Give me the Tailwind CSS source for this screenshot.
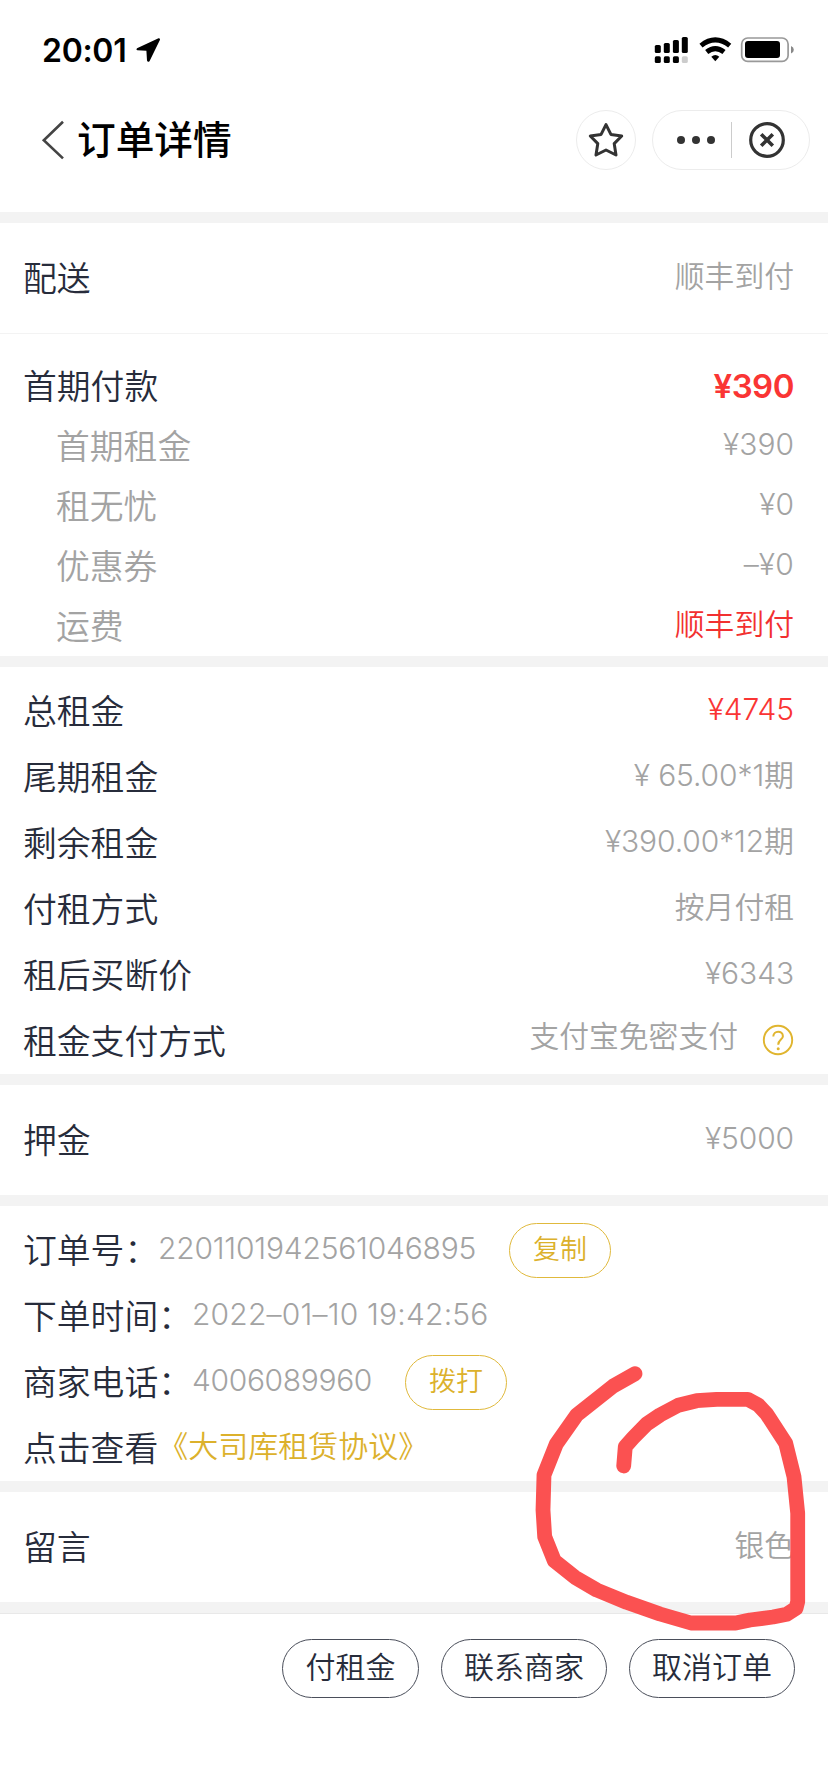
<!DOCTYPE html>
<html lang="zh-CN">
<head>
<meta charset="utf-8">
<title>订单详情</title>
<script src="https://cdn.jsdelivr.net/npm/@tailwindcss/browser@4"></script>
</head>
<body class="bg-white">
<div class="relative flex h-[1792px] w-[828px] flex-col overflow-hidden bg-white font-['Inter','Noto_Sans_CJK_SC',sans-serif] text-[33.8px] font-[350] leading-none text-[#272c3b]">

  <!-- Status bar -->
  <header class="flex h-[100px] shrink-0 items-center pl-[42px] pr-[34px] text-black">
    <span class="pt-0.5 text-[32px] font-semibold tracking-[-0.3px]">20:01</span>
    <svg class="ml-[9px]" width="26" height="26" viewBox="0 0 26 26"><path d="M23.5 1.2 2 11.2Q0.6 12.5 2.3 13.2L11.4 13.8 12 23.5Q12.8 25.8 14.5 24.2L25 2.7Q25.2 0.8 23.5 1.2Z" fill="#000"/></svg>
    <svg class="ml-auto" width="140" height="28" viewBox="654 36 140 28">
      <g fill="#000">
        <rect x="654.8" y="45" width="6" height="8" rx="1.6"/><rect x="663.8" y="43" width="6" height="10" rx="1.6"/><rect x="672.9" y="40" width="6" height="13" rx="1.6"/><rect x="681.8" y="37" width="6" height="16" rx="1.6"/>
        <rect x="654.8" y="56.3" width="6" height="6.7" rx="1.6"/><rect x="663.8" y="56.3" width="6" height="6.7" rx="1.6"/><rect x="672.9" y="56.3" width="6" height="6.7" rx="1.6"/>
        <rect x="681.8" y="56.3" width="6" height="6.7" rx="1.6" fill="#ccc"/>
      </g>
      <g fill="none" stroke="#000" stroke-width="5">
        <path d="M701 45.6Q715.3 34.2 729.700 45.6"/><path d="M706.700 52Q715.3 45.200 724 52"/>
      </g>
      <path d="M711.300 56.800Q715.3 53.200 719.300 56.800L715.3 61.200Z" fill="#000"/>
      <rect x="741.7" y="38" width="46.400" height="23.400" rx="6" fill="none" stroke="#999" stroke-width="1.7"/>
      <rect x="745" y="41" width="35" height="17" rx="3" fill="#000"/>
      <path d="M791 46Q793.8 47 793.8 49.800T791 53.600Z" fill="#888"/>
    </svg>
  </header>

  <!-- Navigation bar -->
  <nav class="flex h-20 shrink-0 items-center pl-[41px] pr-[18px]">
    <svg width="24" height="40" viewBox="0 0 24 40" fill="none" stroke="#444" stroke-width="2.6"><path d="M22 1.8 2.8 20.200 22 38.400"/></svg>
    <h1 class="ml-3 text-[38.700px] font-medium text-black">订单详情</h1>
    <div class="ml-auto flex items-center gap-4">
      <button class="flex size-[60px] items-center justify-center rounded-full border border-[#ececec]">
        <svg width="38" height="38" viewBox="0 0 38 38" fill="none" stroke="#333" stroke-width="3" stroke-linejoin="round"><path d="M19 3.600 23.900 13.400 34.700 15 27.200 22.600 29 34 19 29 9 34 10.800 22.600 3.300 15 14.100 13.400Z"/></svg>
      </button>
      <div class="flex h-[60px] w-[158px] items-center rounded-full border border-[#ececec]">
        <div class="flex w-[78px] justify-center gap-[7px] pl-[8px]"><i class="size-2 rounded-full bg-[#333]"></i><i class="size-2 rounded-full bg-[#333]"></i><i class="size-2 rounded-full bg-[#333]"></i></div>
        <div class="h-9 w-px bg-[#ccc]"></div>
        <div class="flex flex-1 justify-center pr-[7px]">
          <svg width="38" height="38" viewBox="0 0 38 38" fill="none" stroke="#333" stroke-width="3.2"><circle cx="19" cy="19" r="16.300"/><path d="M13.200 13.200 24.800 24.800M24.800 13.200 13.200 24.800" stroke-width="3.600"/></svg>
        </div>
      </div>
    </div>
  </nav>

  <main class="mt-8 flex shrink-0 flex-col bg-[#f3f3f3] pt-[11px]">
    <section class="flex h-[110px] items-center justify-between bg-white pl-[23px] pr-[34px]">
      <span class="pt-0.5">配送</span><span class="pb-0.5 text-[29.800px] text-[#a3a3a3]">顺丰到付</span>
    </section>

    <!-- First payment -->
    <section class="mt-px flex flex-col bg-white pl-[23px] pr-[34px] pt-[22px] *:flex *:h-[60px] *:items-center *:justify-between">
      <div><span class="pt-0.5">首期付款</span><span class="text-[33px] font-semibold tracking-[-0.5px] text-[#fa3534]">¥390</span></div>
      <div class="pl-[33px] text-[#a3a3a3]"><span class="pt-0.5">首期租金</span><span class="pb-1 text-[30px]">¥390</span></div>
      <div class="pl-[33px] text-[#a3a3a3]"><span class="pt-0.5">租无忧</span><span class="pb-1 text-[30px]">¥0</span></div>
      <div class="pl-[33px] text-[#a3a3a3]"><span class="pt-0.5">优惠券</span><span class="pb-1 text-[30px] tracking-[0.2px]">–¥0</span></div>
      <div class="pl-[33px] text-[#a3a3a3]"><span class="pt-0.5">运费</span><span class="pb-0.5 text-[29.800px] text-[#f23030]">顺丰到付</span></div>
    </section>

    <!-- Rent details -->
    <section class="mt-[11px] flex flex-col bg-white pl-[23px] pr-[34px] pt-[11px] *:flex *:h-[66px] *:items-center *:justify-between">
      <div><span class="pt-0.5">总租金</span><span class="pb-1 text-[30px] tracking-[-0.1px] text-[#fa3534]">¥4745</span></div>
      <div><span class="pt-0.5">尾期租金</span><span class="pb-1 text-[30px] tracking-[-0.1px] text-[#a3a3a3]">¥ 65.00*1期</span></div>
      <div><span class="pt-0.5">剩余租金</span><span class="pb-1 text-[30px] tracking-[-0.1px] text-[#a3a3a3]">¥390.00*12期</span></div>
      <div><span class="pt-0.5">付租方式</span><span class="pb-0.5 text-[29.800px] text-[#a3a3a3]">按月付租</span></div>
      <div><span class="pt-0.5">租后买断价</span><span class="pb-1 text-[30px] tracking-[-0.1px] text-[#a3a3a3]">¥6343</span></div>
      <div><span class="pt-0.5">租金支付方式</span>
        <span class="flex items-center gap-6 pb-0.5 text-[29.800px] text-[#a3a3a3]"><span class="pb-1.5">支付宝免密支付</span>
          <svg width="32" height="32" viewBox="0 0 32 32" fill="none" stroke="#e0b52f" stroke-width="1.9"><circle cx="16" cy="16" r="14.200"/><path d="M11.300 12.600C11.300 6.200 20.900 6.200 20.900 12.200 20.900 15.600 16.200 15.800 16.200 20.800" stroke-width="2"/><circle cx="16.200" cy="24.800" r="1.500" fill="#e0b52f" stroke="none"/></svg>
        </span>
      </div>
    </section>

    <section class="mt-[11px] flex h-[110px] items-center justify-between bg-white pl-[23px] pr-[34px]">
      <span class="pt-0.5">押金</span><span class="pb-1 text-[30px] tracking-[-0.1px] text-[#a3a3a3]">¥5000</span>
    </section>

    <!-- Order information -->
    <section class="mt-[11px] flex flex-col bg-white pl-[23px] pt-[11px] *:flex *:h-[66px] *:items-center">
      <div><span class="w-[135px] whitespace-nowrap pt-0.5">订单号：</span><span class="w-[351px] pb-1 text-[30px] tracking-[-0.2px] text-[#a3a3a3]">2201101942561046895</span><button class="h-[55px] w-[102px] rounded-full border border-[#e0b93c] pb-0.5 text-[27px] text-[#dcb12c]">复制</button></div>
      <div><span class="w-[169px] whitespace-nowrap pt-0.5">下单时间：</span><span class="pb-1 text-[30px] tracking-[0.2px] text-[#a3a3a3]">2022–01–10 19:42:56</span></div>
      <div><span class="w-[169px] whitespace-nowrap pt-0.5">商家电话：</span><span class="w-[213px] pb-1 text-[30px] tracking-[-0.35px] text-[#a3a3a3]">4006089960</span><button class="h-[55px] w-[102px] rounded-full border border-[#e0b93c] pb-0.5 text-[27px] text-[#dcb12c]">拨打</button></div>
      <div><span class="pt-0.5">点击查看</span><span class="pb-1 text-[30px] text-[#dcb12c]">《大司库租赁协议》</span></div>
    </section>

    <section class="mt-[11px] flex h-[110px] items-center justify-between bg-white pl-[23px] pr-[34px]">
      <span class="pt-0.5">留言</span><span class="pb-0.5 text-[29.800px] text-[#a3a3a3]">银色</span>
    </section>
    <div class="h-3 border-b border-[#e8e8e8]"></div>
  </main>

  <!-- Actions -->
  <footer class="flex shrink-0 justify-end gap-[22px] pr-[33px] pt-[25px] text-[30px] *:h-[59px] *:rounded-full *:border *:border-[#4a4e5a] *:pb-1">
    <button class="w-[137px]">付租金</button>
    <button class="w-[166px]">联系商家</button>
    <button class="w-[166px]">取消订单</button>
  </footer>

  <!-- Freehand marker stroke -->
  <svg class="pointer-events-none absolute left-0 top-0" width="828" height="1792" viewBox="0 0 828 1792" fill="none" stroke="#fb5151" stroke-width="14.800" stroke-linecap="round" stroke-linejoin="round">
    <path d="M635 1373.700 613.300 1386 576.700 1415 556.300 1444 544 1475 543 1510 544.700 1536.700 554.300 1560.700 575 1577.300 596.700 1590 626.700 1602.300 660 1614 691 1623H735.700L750 1620 773 1617 786.700 1614.300 796 1608.300 797.700 1601.700V1513.300L794 1476.700 785.700 1443.300 766.700 1414 758.300 1405 747.700 1399.300H716.700L696.700 1400.700 678.300 1405.300 660 1415 646.700 1424 633.300 1437.700 625.300 1446.700 623.700 1466"/>
  </svg>
</div>
</body>
</html>
